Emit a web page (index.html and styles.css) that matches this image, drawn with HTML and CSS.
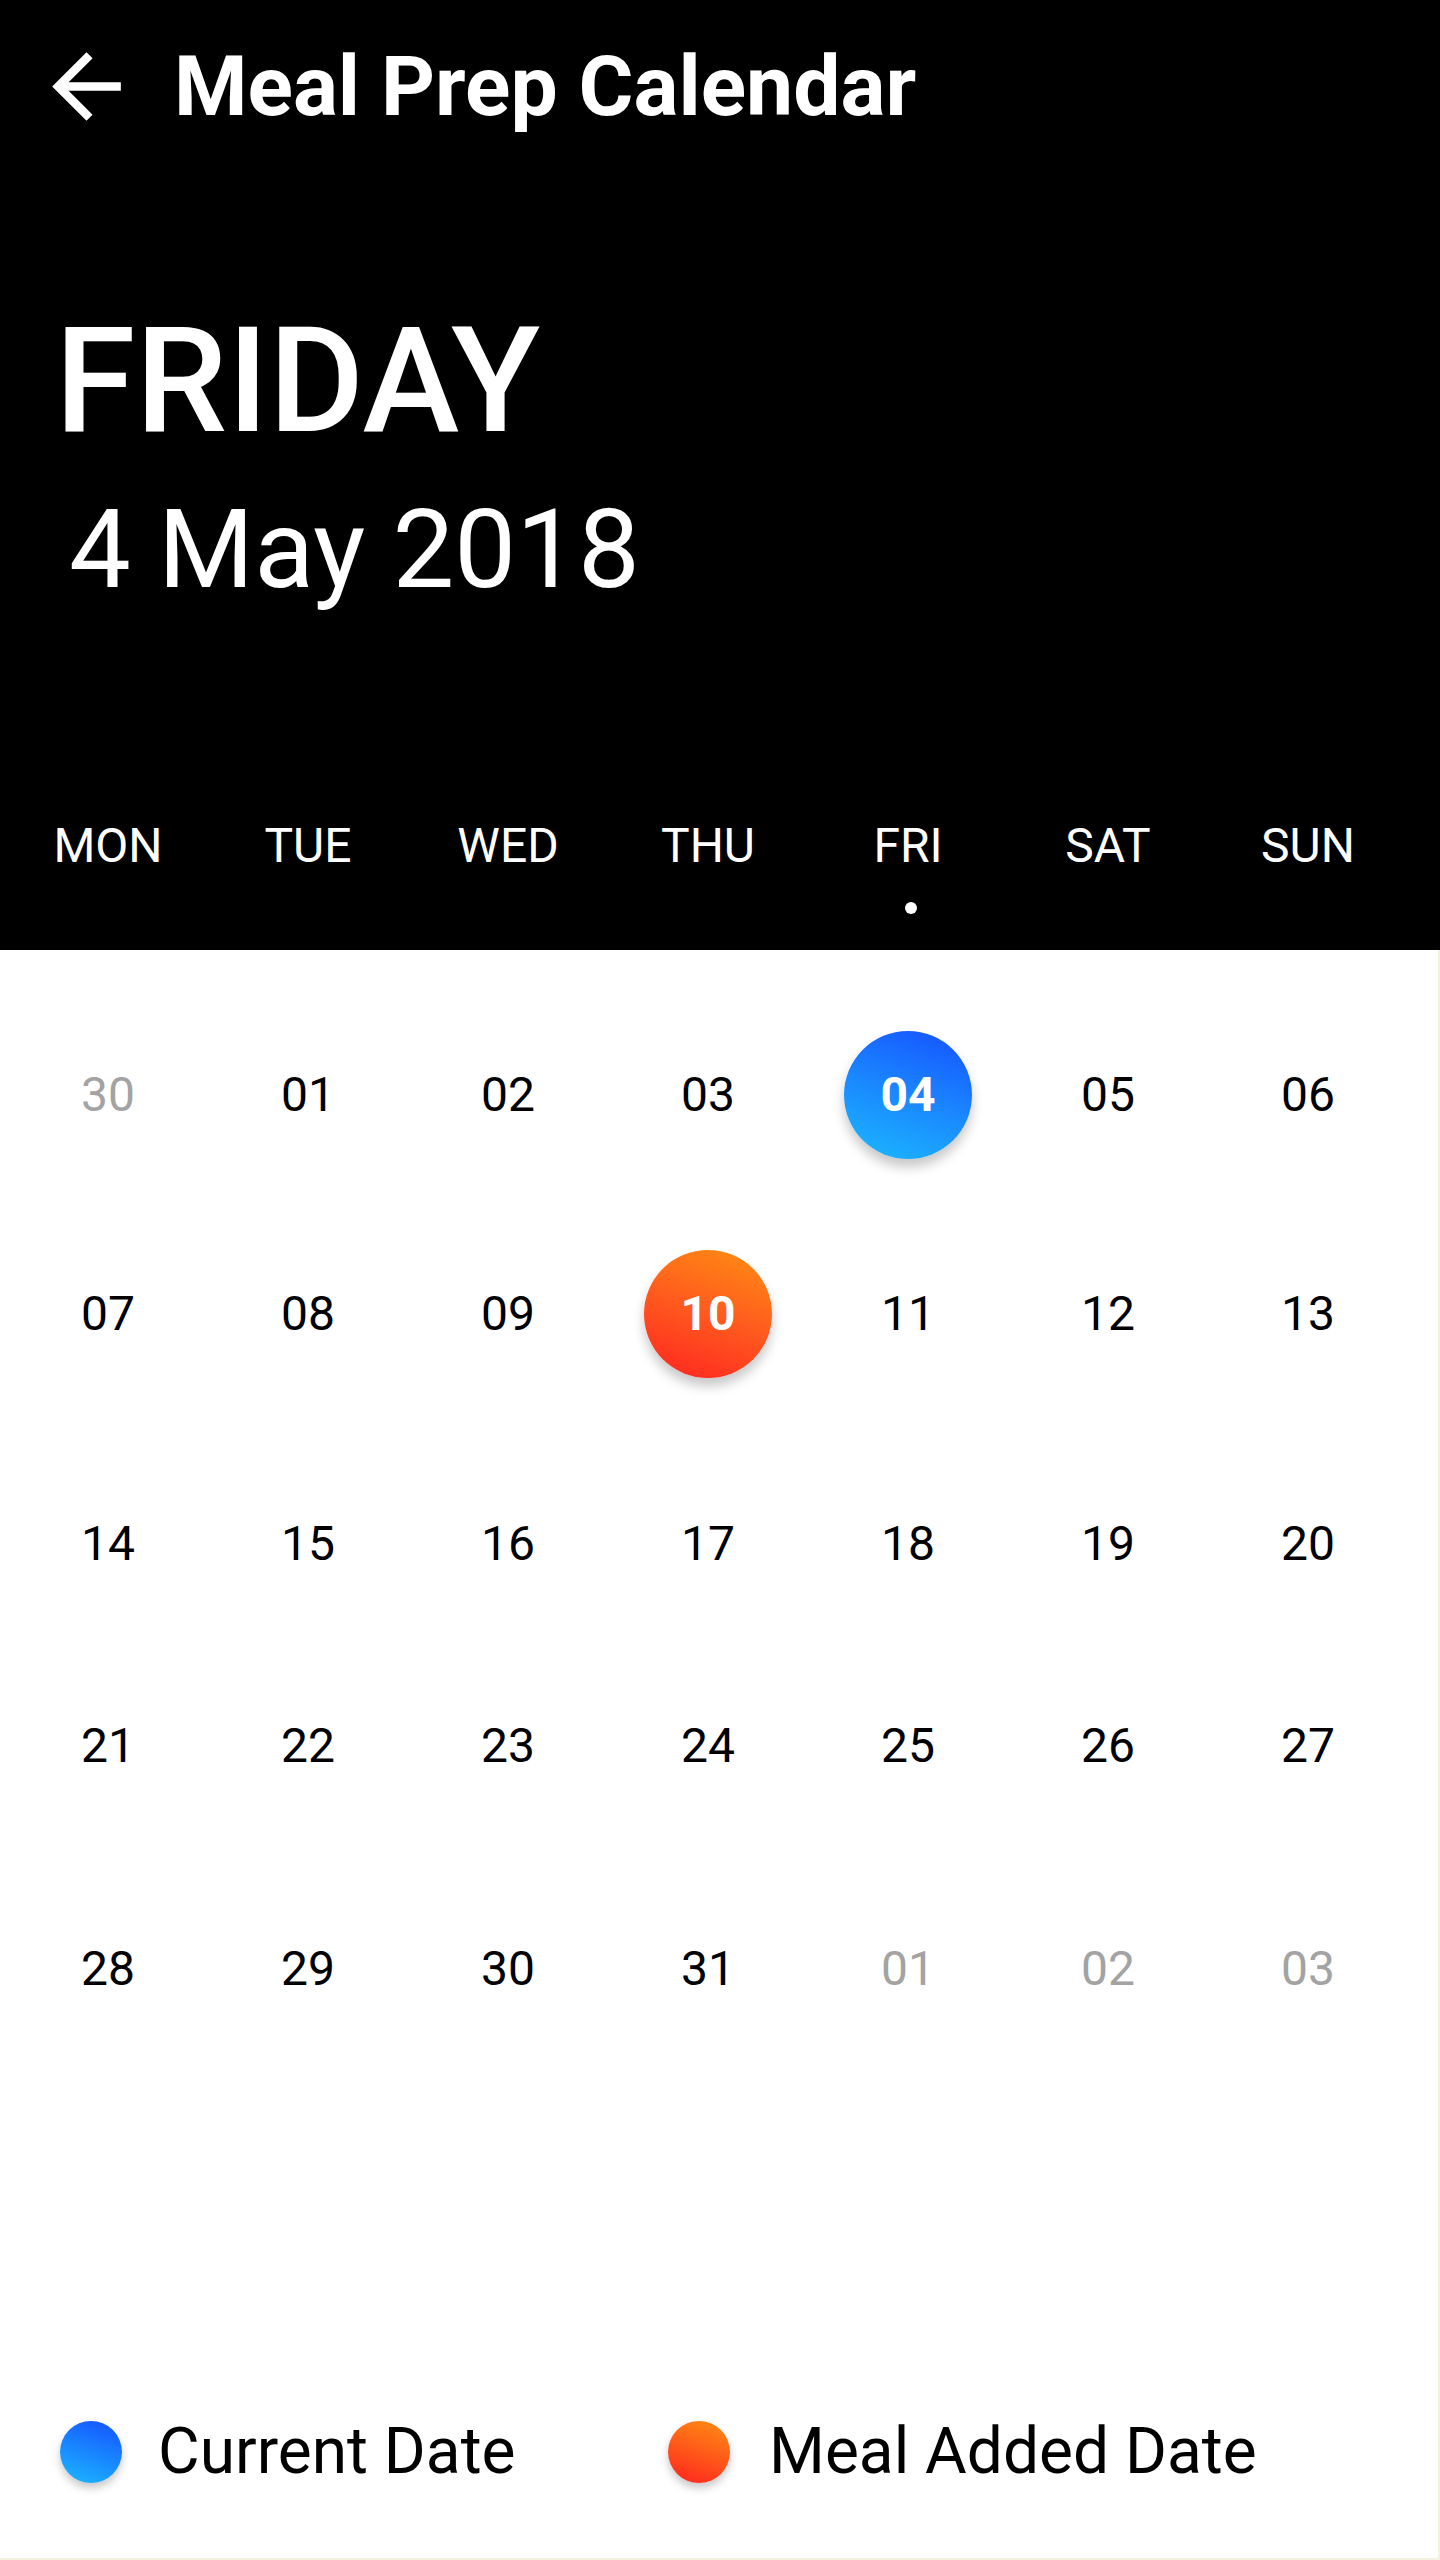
FILE: index.html
```html
<!DOCTYPE html>
<html lang="en">
<head>
<meta charset="utf-8">
<title>Meal Prep Calendar</title>
<link rel="stylesheet" href="styles.css">
</head>
<body>
<div class="screen">
  <header class="hero">
    <div class="topbar">
      <svg class="back" viewBox="0 0 24 24" aria-hidden="true"><path d="M20 11H7.83l5.59-5.59L12 4l-8 8 8 8 1.41-1.41L7.83 13H20v-2z" fill="#fff"/></svg>
      <h1 class="title">Meal Prep Calendar</h1>
    </div>
    <div class="day-name">FRIDAY</div>
    <div class="full-date">4 May 2018</div>
    <div class="weekdays">
      <div class="wd">MON</div>
      <div class="wd">TUE</div>
      <div class="wd">WED</div>
      <div class="wd">THU</div>
      <div class="wd wd-active">FRI</div>
      <div class="wd">SAT</div>
      <div class="wd">SUN</div>
    </div>
  </header>
  <main class="body">
    <div class="grid">
      <div class="cell muted">30</div><div class="cell">01</div><div class="cell">02</div><div class="cell">03</div><div class="cell"><span class="badge badge-blue">04</span></div><div class="cell">05</div><div class="cell">06</div>
      <div class="cell">07</div><div class="cell">08</div><div class="cell">09</div><div class="cell"><span class="badge badge-orange">10</span></div><div class="cell">11</div><div class="cell">12</div><div class="cell">13</div>
      <div class="cell">14</div><div class="cell">15</div><div class="cell">16</div><div class="cell">17</div><div class="cell">18</div><div class="cell">19</div><div class="cell">20</div>
      <div class="cell">21</div><div class="cell">22</div><div class="cell">23</div><div class="cell">24</div><div class="cell">25</div><div class="cell">26</div><div class="cell">27</div>
      <div class="cell">28</div><div class="cell">29</div><div class="cell">30</div><div class="cell">31</div><div class="cell muted">01</div><div class="cell muted">02</div><div class="cell muted">03</div>
    </div>
    <div class="legend">
      <div class="legend-item legend-first"><span class="ldot ldot-blue"></span><span class="ltext ltext-first">Current Date</span></div>
      <div class="legend-item"><span class="ldot ldot-orange"></span><span class="ltext">Meal Added Date</span></div>
    </div>
  </main>
</div>
</body>
</html>
```

FILE: styles.css
```css
html, body {
  margin: 0;
  padding: 0;
  background: #ffffff;
}
body {
  font-family: Roboto, "Liberation Sans", Arial, sans-serif;
  color: #000;
}
.screen {
  width: 1440px;
  height: 2560px;
  display: flex;
  flex-direction: column;
}
.hero {
  background: #000;
  color: #fff;
  height: 950px;
  box-sizing: border-box;
  display: flex;
  flex-direction: column;
}
.topbar {
  display: flex;
  align-items: center;
  padding: 35px 0 0 35px;
  height: 103px;
}
.back {
  width: 103px;
  height: 103px;
  flex: none;
}
.title {
  margin: 0 0 0 36px;
  font-size: 84px;
  font-weight: 700;
  line-height: 1;
  letter-spacing: 0;
}
.day-name {
  margin: 171px 0 0 55px;
  font-size: 146px;
  font-weight: 500;
  line-height: 1;
}
.full-date {
  margin: 40px 0 0 69px;
  font-size: 110px;
  font-weight: 400;
  line-height: 1;
}
.weekdays {
  margin-top: 217px;
  padding-left: 8px;
  display: grid;
  grid-template-columns: repeat(7, 200px);
}
.wd {
  font-size: 48px;
  line-height: 1;
  text-align: center;
  height: 89px;
  position: relative;
}
.wd-active::after {
  content: "";
  position: absolute;
  left: 97px;
  top: 80px;
  width: 12px;
  height: 12px;
  border-radius: 50%;
  background: #fff;
}
.body {
  flex: 1;
  display: flex;
  flex-direction: column;
  box-sizing: border-box;
  border-right: 2px solid #f3f1df;
  border-bottom: 2px solid #f3f1df;
  padding-top: 35px;
}
.grid {
  padding-left: 8px;
  display: grid;
  grid-template-columns: repeat(7, 200px);
  grid-template-rows: 219px 219px 241px 163px 283px;
}
.cell {
  display: flex;
  align-items: center;
  justify-content: center;
  font-size: 48px;
  line-height: 1;
  color: #000;
}
.muted {
  color: #a3a3a3;
}
.badge {
  width: 128px;
  height: 128px;
  border-radius: 50%;
  display: flex;
  align-items: center;
  justify-content: center;
  color: #fff;
  font-weight: 700;
  box-shadow: 0 8px 12px rgba(0, 0, 0, 0.22);
}
.badge-blue {
  background: linear-gradient(200deg, #1650ff 0%, #1a86ff 50%, #1bb9ff 100%);
}
.badge-orange {
  background: linear-gradient(200deg, #ff8f12 0%, #ff5a1e 50%, #ff2320 100%);
}
.legend {
  margin-top: auto;
  margin-bottom: 74px;
  padding-left: 60px;
  display: flex;
  align-items: center;
}
.legend-item {
  display: flex;
  align-items: center;
}
.legend-first {
  width: 608px;
}
.ldot {
  width: 62px;
  height: 62px;
  border-radius: 50%;
  flex: none;
  box-shadow: 0 5px 8px rgba(0, 0, 0, 0.22);
}
.ldot-blue {
  background: linear-gradient(200deg, #1650ff 0%, #1bb9ff 100%);
}
.ldot-orange {
  background: linear-gradient(200deg, #ff8f12 0%, #ff2320 100%);
}
.ltext {
  margin-left: 39px;
  font-size: 64px;
  line-height: 1;
}
.ltext-first {
  margin-left: 36px;
}
```
